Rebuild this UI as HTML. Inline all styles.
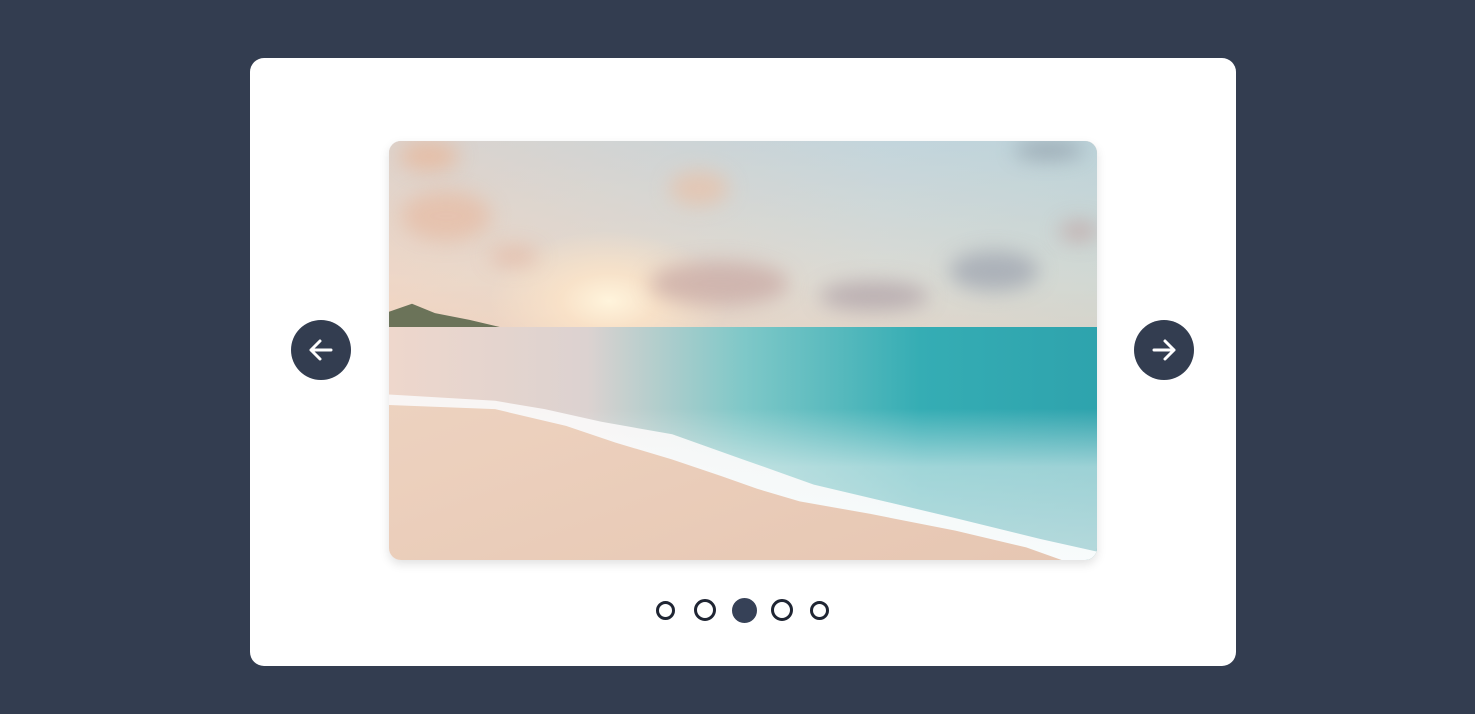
<!DOCTYPE html>
<html><head><style>
html,body{margin:0;padding:0;width:1475px;height:714px;background:#333d50;overflow:hidden}
.card{position:absolute;left:250px;top:58px;width:986px;height:608px;background:#fff;border-radius:14px}
.img{position:absolute;left:389px;top:141px;width:708px;height:419px;border-radius:12px;overflow:hidden;box-shadow:0 4px 10px rgba(0,0,0,.12);background:#e9cfc0}
.sky{position:absolute;left:0;top:0;width:708px;height:187px;
background:radial-gradient(ellipse 120px 70px at 220px 160px,#fff4dc 0%,rgba(255,230,200,.7) 40%,rgba(255,220,190,0) 100%),
linear-gradient(90deg,rgba(240,210,190,.5),rgba(180,215,220,.3) 70%,rgba(170,210,215,.4)),
linear-gradient(180deg,#c9d4dc,#ecdcd0 75%,#f3d6c4)}
.cloud{position:absolute;border-radius:50%;filter:blur(10px);opacity:.75}
.sea{position:absolute;left:0;top:186px;width:708px;height:233px;
background:linear-gradient(180deg,rgba(255,255,255,0) 0%,rgba(255,255,255,0) 35%,rgba(230,240,240,.6) 60%,rgba(240,240,240,.7) 100%),
linear-gradient(90deg,#eed7cc 0%,#dcd2d0 28%,#7fc8c8 50%,#35adb4 75%,#2ea3ad 100%)}
.foam{position:absolute;left:0;top:0;width:708px;height:419px;background:linear-gradient(180deg,#f2eeee,#ffffff);opacity:.9;
clip-path:polygon(0 60.5%,15% 62%,22% 64%,30% 67%,40% 70%,50% 76%,60% 82%,70% 86%,80% 90%,92% 95%,100% 98%,100% 100%,0 100%)}
.sand{position:absolute;left:0;top:0;width:708px;height:419px;
background:linear-gradient(160deg,#efd8c8 0%,#ecd0bd 50%,#e6c6b2 100%);
clip-path:polygon(0 63%,15% 64%,25% 68%,32% 72%,40% 76%,47% 80%,52% 83%,58% 86%,68% 89%,80% 93%,90% 97%,95% 100%,0 100%)}
.btn{position:absolute;width:60px;height:60px;border-radius:50%;background:#333d50;top:320px}
.dot{position:absolute;border-radius:50%;box-sizing:border-box;border:3px solid #1f2533;background:#fff}
</style></head><body>
<div class="card"></div>
<div class="img">
<div class="sky"></div>
<div class="cloud" style="left:10px;top:0;width:60px;height:30px;background:#e8b79a"></div>
<div class="cloud" style="left:12px;top:50px;width:90px;height:50px;background:#e6bca5"></div>
<div class="cloud" style="left:280px;top:30px;width:60px;height:35px;background:#e8c2aa"></div>
<div class="cloud" style="left:260px;top:120px;width:140px;height:45px;background:#c9a9a4"></div>
<div class="cloud" style="left:430px;top:140px;width:110px;height:30px;background:#b0a2a8"></div>
<div class="cloud" style="left:560px;top:110px;width:90px;height:40px;background:#9ea4b0"></div>
<div class="cloud" style="left:625px;top:0;width:70px;height:18px;background:#8d9aa5"></div>
<div class="cloud" style="left:670px;top:80px;width:40px;height:20px;background:#c1a5a5"></div>
<div class="cloud" style="left:100px;top:105px;width:50px;height:20px;background:#e4b9a5"></div>
<div style="position:absolute;left:0;top:160px;width:115px;height:27px;background:#4a5a3e;clip-path:polygon(0 40%,20% 10%,40% 45%,70% 70%,100% 100%,0 100%);opacity:.8"></div>
<div class="sea"></div>
<div class="foam"></div>
<div class="sand"></div>
</div>
<div class="btn" style="left:291px"><svg width="60" height="60"><path d="M40 30H20M29 21l-9 9 9 9" stroke="#fff" stroke-width="3" fill="none" stroke-linecap="round" stroke-linejoin="round"/></svg></div>
<div class="btn" style="left:1134px"><svg width="60" height="60"><path d="M20 30h20M31 21l9 9-9 9" stroke="#fff" stroke-width="3" fill="none" stroke-linecap="round" stroke-linejoin="round"/></svg></div>
<div class="dot" style="left:656px;top:601px;width:19px;height:19px"></div>
<div class="dot" style="left:694px;top:599px;width:22px;height:22px"></div>
<div class="dot" style="left:732px;top:598px;width:25px;height:25px;background:#364157;border-color:#364157"></div>
<div class="dot" style="left:771px;top:599px;width:22px;height:22px"></div>
<div class="dot" style="left:810px;top:601px;width:19px;height:19px"></div>
</body></html>
